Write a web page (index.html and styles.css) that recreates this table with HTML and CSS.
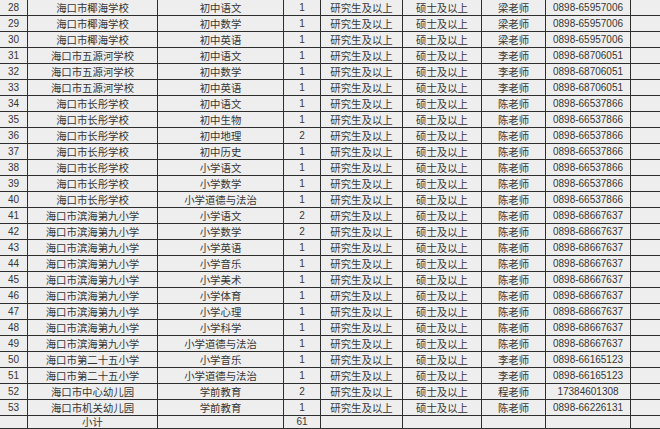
FILE: index.html
```html
<!DOCTYPE html>
<html lang="zh-CN">
<head>
<meta charset="utf-8">
<title>招聘岗位表</title>
<link rel="stylesheet" href="styles.css">
</head>
<body>
<div class="sheet">
<table class="grid">
<colgroup>
<col class="c-no"><col class="c-school"><col class="c-subject"><col class="c-count"><col class="c-edu"><col class="c-degree"><col class="c-contact"><col class="c-phone"><col class="c-extra">
</colgroup>
<tbody>
<tr><td class="num">28</td><td>海口市椰海学校</td><td>初中语文</td><td class="num">1</td><td>研究生及以上</td><td>硕士及以上</td><td>梁老师</td><td class="num">0898-65957006</td><td></td></tr>
<tr><td class="num">29</td><td>海口市椰海学校</td><td>初中数学</td><td class="num">1</td><td>研究生及以上</td><td>硕士及以上</td><td>梁老师</td><td class="num">0898-65957006</td><td></td></tr>
<tr><td class="num">30</td><td>海口市椰海学校</td><td>初中英语</td><td class="num">1</td><td>研究生及以上</td><td>硕士及以上</td><td>梁老师</td><td class="num">0898-65957006</td><td></td></tr>
<tr><td class="num">31</td><td>海口市五源河学校</td><td>初中语文</td><td class="num">1</td><td>研究生及以上</td><td>硕士及以上</td><td>李老师</td><td class="num">0898-68706051</td><td></td></tr>
<tr><td class="num">32</td><td>海口市五源河学校</td><td>初中数学</td><td class="num">1</td><td>研究生及以上</td><td>硕士及以上</td><td>李老师</td><td class="num">0898-68706051</td><td></td></tr>
<tr><td class="num">33</td><td>海口市五源河学校</td><td>初中英语</td><td class="num">1</td><td>研究生及以上</td><td>硕士及以上</td><td>李老师</td><td class="num">0898-68706051</td><td></td></tr>
<tr><td class="num">34</td><td>海口市长彤学校</td><td>初中语文</td><td class="num">1</td><td>研究生及以上</td><td>硕士及以上</td><td>陈老师</td><td class="num">0898-66537866</td><td></td></tr>
<tr><td class="num">35</td><td>海口市长彤学校</td><td>初中生物</td><td class="num">1</td><td>研究生及以上</td><td>硕士及以上</td><td>陈老师</td><td class="num">0898-66537866</td><td></td></tr>
<tr><td class="num">36</td><td>海口市长彤学校</td><td>初中地理</td><td class="num">2</td><td>研究生及以上</td><td>硕士及以上</td><td>陈老师</td><td class="num">0898-66537866</td><td></td></tr>
<tr><td class="num">37</td><td>海口市长彤学校</td><td>初中历史</td><td class="num">1</td><td>研究生及以上</td><td>硕士及以上</td><td>陈老师</td><td class="num">0898-66537866</td><td></td></tr>
<tr><td class="num">38</td><td>海口市长彤学校</td><td>小学语文</td><td class="num">1</td><td>研究生及以上</td><td>硕士及以上</td><td>陈老师</td><td class="num">0898-66537866</td><td></td></tr>
<tr><td class="num">39</td><td>海口市长彤学校</td><td>小学数学</td><td class="num">1</td><td>研究生及以上</td><td>硕士及以上</td><td>陈老师</td><td class="num">0898-66537866</td><td></td></tr>
<tr><td class="num">40</td><td>海口市长彤学校</td><td>小学道德与法治</td><td class="num">1</td><td>研究生及以上</td><td>硕士及以上</td><td>陈老师</td><td class="num">0898-66537866</td><td></td></tr>
<tr><td class="num">41</td><td>海口市滨海第九小学</td><td>小学语文</td><td class="num">2</td><td>研究生及以上</td><td>硕士及以上</td><td>陈老师</td><td class="num">0898-68667637</td><td></td></tr>
<tr><td class="num">42</td><td>海口市滨海第九小学</td><td>小学数学</td><td class="num">2</td><td>研究生及以上</td><td>硕士及以上</td><td>陈老师</td><td class="num">0898-68667637</td><td></td></tr>
<tr><td class="num">43</td><td>海口市滨海第九小学</td><td>小学英语</td><td class="num">1</td><td>研究生及以上</td><td>硕士及以上</td><td>陈老师</td><td class="num">0898-68667637</td><td></td></tr>
<tr><td class="num">44</td><td>海口市滨海第九小学</td><td>小学音乐</td><td class="num">1</td><td>研究生及以上</td><td>硕士及以上</td><td>陈老师</td><td class="num">0898-68667637</td><td></td></tr>
<tr><td class="num">45</td><td>海口市滨海第九小学</td><td>小学美术</td><td class="num">1</td><td>研究生及以上</td><td>硕士及以上</td><td>陈老师</td><td class="num">0898-68667637</td><td></td></tr>
<tr><td class="num">46</td><td>海口市滨海第九小学</td><td>小学体育</td><td class="num">1</td><td>研究生及以上</td><td>硕士及以上</td><td>陈老师</td><td class="num">0898-68667637</td><td></td></tr>
<tr><td class="num">47</td><td>海口市滨海第九小学</td><td>小学心理</td><td class="num">1</td><td>研究生及以上</td><td>硕士及以上</td><td>陈老师</td><td class="num">0898-68667637</td><td></td></tr>
<tr><td class="num">48</td><td>海口市滨海第九小学</td><td>小学科学</td><td class="num">1</td><td>研究生及以上</td><td>硕士及以上</td><td>陈老师</td><td class="num">0898-68667637</td><td></td></tr>
<tr><td class="num">49</td><td>海口市滨海第九小学</td><td>小学道德与法治</td><td class="num">1</td><td>研究生及以上</td><td>硕士及以上</td><td>陈老师</td><td class="num">0898-68667637</td><td></td></tr>
<tr><td class="num">50</td><td>海口市第二十五小学</td><td>小学音乐</td><td class="num">1</td><td>研究生及以上</td><td>硕士及以上</td><td>李老师</td><td class="num">0898-66165123</td><td></td></tr>
<tr><td class="num">51</td><td>海口市第二十五小学</td><td>小学道德与法治</td><td class="num">1</td><td>研究生及以上</td><td>硕士及以上</td><td>李老师</td><td class="num">0898-66165123</td><td></td></tr>
<tr><td class="num">52</td><td>海口市中心幼儿园</td><td>学前教育</td><td class="num">2</td><td>研究生及以上</td><td>硕士及以上</td><td>程老师</td><td class="num">17384601308</td><td></td></tr>
<tr><td class="num">53</td><td>海口市机关幼儿园</td><td>学前教育</td><td class="num">1</td><td>研究生及以上</td><td>硕士及以上</td><td>陈老师</td><td class="num">0898-66226131</td><td></td></tr>
<tr class="total"><td></td><td>小计</td><td></td><td class="num">61</td><td></td><td></td><td></td><td></td><td></td></tr>
</tbody>
</table>
</div>
</body>
</html>
```

FILE: styles.css
```css
html, body {
  margin: 0;
  padding: 0;
  background: #eeeeee;
}
.sheet {
  width: 660px;
  height: 429px;
  overflow: hidden;
}
.grid {
  border-collapse: collapse;
  table-layout: fixed;
  width: 701px;
  margin: -1px 0 0 -1px;
  font-family: "Noto Sans CJK SC", "Liberation Sans", sans-serif;
  font-size: 10.4px;
  color: #363636;
}
.c-no { width: 28px; }
.c-school { width: 130px; }
.c-subject { width: 126px; }
.c-count { width: 37px; }
.c-edu { width: 82px; }
.c-degree { width: 79px; }
.c-contact { width: 64px; }
.c-phone { width: 85px; }
.c-extra { width: 70px; }
.grid td {
  border: 1px solid #2e2e2e;
  height: 15px;
  padding: 0;
  text-align: center;
  vertical-align: middle;
  line-height: 15px;
  white-space: nowrap;
  overflow: hidden;
  background: #eeeeee;
}
.grid .total td {
  height: 12px;
  line-height: 12px;
}
.grid td.num {
  font-family: "Liberation Sans", sans-serif;
  font-size: 10px;
}
```
